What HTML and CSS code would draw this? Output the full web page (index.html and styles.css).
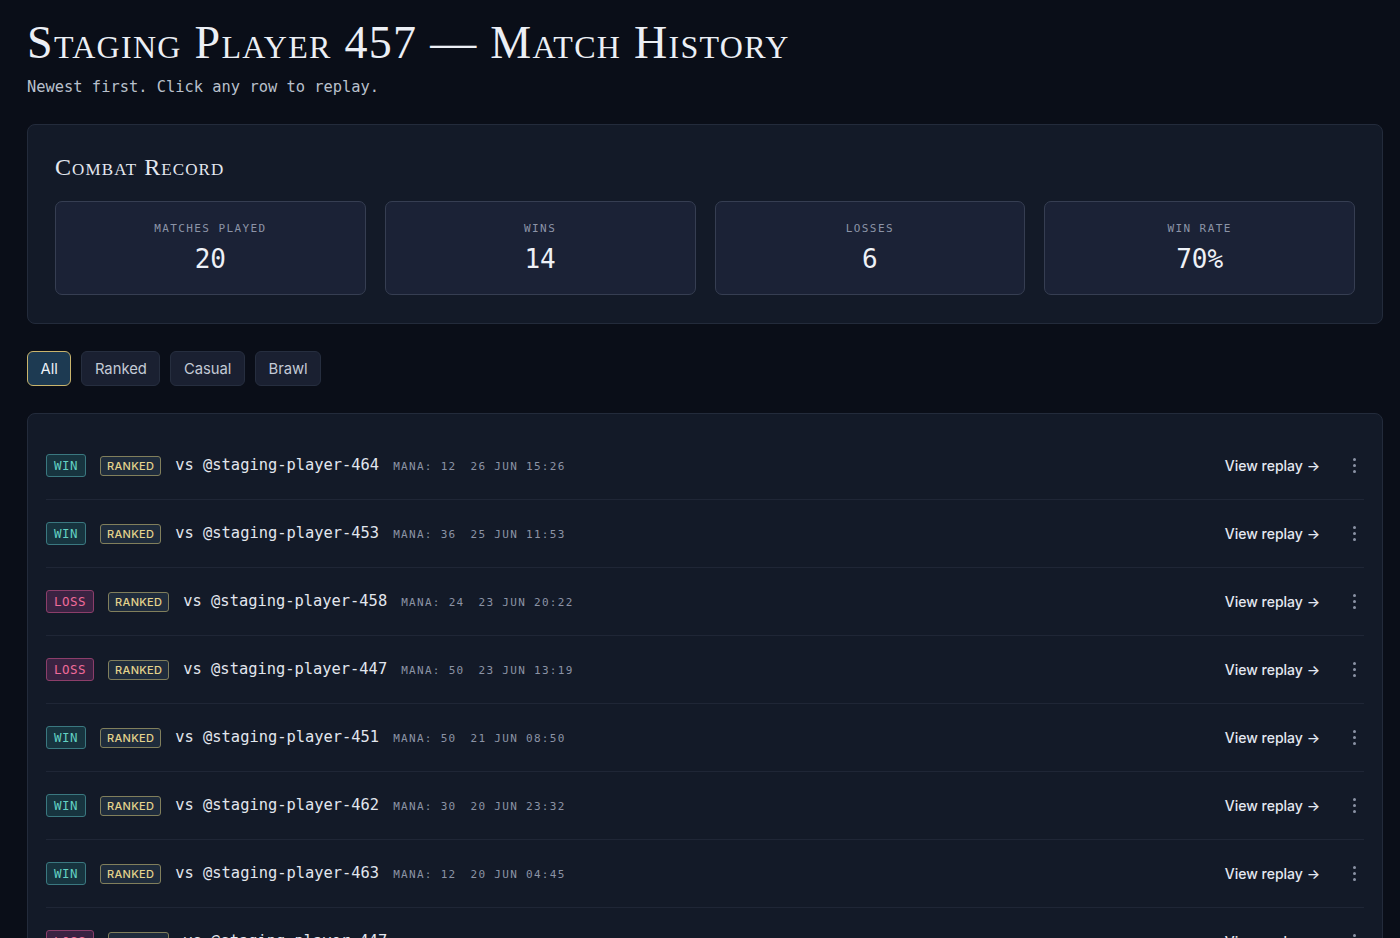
FILE: index.html
```html
<html lang="en">
<head>
    <meta charset="UTF-8">
    <meta name="viewport" content="width=device-width, initial-scale=1.0">
    <title>Match History</title>
    <link rel="stylesheet" href="styles.css">
</head>
<body>

<div class="page">
    <h1 class="title">Staging Player 457 — Match History</h1>
    <p class="subtitle">Newest first. Click any row to replay.</p>

    <section class="panel record">
        <h2 class="panel-title">Combat Record</h2>
        <div class="stats">
            <div class="stat">
                <div class="stat-label">Matches played</div>
                <div class="stat-value">20</div>
            </div>
            <div class="stat">
                <div class="stat-label">Wins</div>
                <div class="stat-value">14</div>
            </div>
            <div class="stat">
                <div class="stat-label">Losses</div>
                <div class="stat-value">6</div>
            </div>
            <div class="stat">
                <div class="stat-label">Win rate</div>
                <div class="stat-value">70%</div>
            </div>
        </div>
    </section>

    <div class="filters">
        <button class="filter active">All</button>
        <button class="filter">Ranked</button>
        <button class="filter">Casual</button>
        <button class="filter">Brawl</button>
    </div>

    <section class="panel matches" id="matches">
        <!-- rows are added by the script below -->
    </section>
</div>

<script>
    const matches = [
        { result: "win", mode: "Ranked", opponent: "464", mana: 12, date: "26 Jun 15:26" },
        { result: "win", mode: "Ranked", opponent: "453", mana: 36, date: "25 Jun 11:53" },
        { result: "loss", mode: "Ranked", opponent: "458", mana: 24, date: "23 Jun 20:22" },
        { result: "loss", mode: "Ranked", opponent: "447", mana: 50, date: "23 Jun 13:19" },
        { result: "win", mode: "Ranked", opponent: "451", mana: 50, date: "21 Jun 08:50" },
        { result: "win", mode: "Ranked", opponent: "462", mana: 30, date: "20 Jun 23:32" },
        { result: "win", mode: "Ranked", opponent: "463", mana: 12, date: "20 Jun 04:45" },
        { result: "loss", mode: "Ranked", opponent: "447", mana: 18, date: "19 Jun 17:02" },
        { result: "win", mode: "Casual", opponent: "455", mana: 42, date: "18 Jun 21:14" }
    ];

    const list = document.getElementById('matches');
    matches.forEach(m => {
        const row = document.createElement('div');
        row.className = 'match';
        row.innerHTML = `
            <div class="match-info">
                <span class="badge result ${m.result}">${m.result.toUpperCase()}</span>
                <span class="badge mode">${m.mode.toUpperCase()}</span>
                <span class="opponent">vs @staging-player-${m.opponent}</span>
                <span class="meta">Mana: ${m.mana}</span>
                <span class="meta">${m.date}</span>
            </div>
            <a class="replay" href="#">View replay →</a>
            <button class="more" aria-label="More"><i></i><i></i><i></i></button>
        `;
        list.appendChild(row);
    });
</script>

</body>
</html>
```

FILE: styles.css
```css
body, html {
    margin: 0;
    padding: 0;
    background-color: #0a0e18;
    color: #e6eaf2;
    font-family: Inter, "Noto Sans", sans-serif;
}

.page {
    padding: 18px 17px 0 27px;
}

.title {
    margin: 0;
    font-family: "Liberation Serif", serif;
    font-variant: small-caps;
    font-weight: normal;
    font-size: 46px;
    line-height: 50px;
    letter-spacing: 1.3px;
    color: #eceff5;
}

.subtitle {
    margin: 10px 0 0;
    font-family: "DejaVu Sans Mono", monospace;
    font-size: 15.4px;
    color: #b9c0cc;
}

.panel {
    background-color: #131a28;
    border: 1px solid #232b3b;
    border-radius: 8px;
}

.record {
    margin-top: 28px;
    padding: 28px 27px 28px;
}

.panel-title {
    margin: 0 0 20px;
    font-family: "Liberation Serif", serif;
    font-variant: small-caps;
    font-weight: normal;
    font-size: 24px;
    line-height: 28px;
    letter-spacing: 1.1px;
    color: #e3e7ef;
}

.stats {
    display: grid;
    grid-template-columns: repeat(4, 1fr);
    gap: 19px;
}

.stat {
    height: 92px;
    background-color: #1b2236;
    border: 1px solid #363e52;
    border-radius: 7px;
    display: flex;
    flex-direction: column;
    align-items: center;
    justify-content: center;
    gap: 9px;
}

.stat-label {
    font-family: "DejaVu Sans Mono", monospace;
    font-size: 11px;
    letter-spacing: 1.4px;
    text-transform: uppercase;
    color: #8c94a7;
}

.stat-value {
    font-family: "DejaVu Sans Mono", monospace;
    font-size: 26px;
    line-height: 30px;
    color: #eef1f7;
}

.filters {
    display: flex;
    gap: 10px;
    margin: 27px 0 27px;
}

.filter {
    height: 35px;
    padding: 0 12.5px;
    font-family: Inter, sans-serif;
    font-size: 14.8px;
    color: #c3cad6;
    background-color: #1a2031;
    border: 1px solid #262e3f;
    border-radius: 6px;
    cursor: pointer;
}

.filter.active {
    background-color: #1d3a52;
    border-color: #c9b46c;
    color: #eef2f8;
}

.matches {
    padding: 18px 0 0;
}

.match {
    box-sizing: border-box;
    display: flex;
    align-items: center;
    height: 68px;
    margin: 0 18px;
    border-bottom: 1px solid #1f2636;
}

.match-info {
    flex: 1;
    display: flex;
    align-items: baseline;
    gap: 14px;
}

.badge {
    border-radius: 3px;
    border: 1px solid;
}

.result {
    padding: 3px 7px;
    font-family: "DejaVu Sans Mono", monospace;
    font-size: 12.5px;
    line-height: 15px;
    letter-spacing: 0.5px;
}

.result.win {
    color: #62d1c2;
    background-color: #17343f;
    border-color: #3a7880;
}

.result.loss {
    color: #f06b9a;
    background-color: #3a2342;
    border-color: #8c3e6a;
}

.mode {
    padding: 2px 6px;
    font-size: 11px;
    line-height: 14px;
    font-weight: 500;
    letter-spacing: 0.3px;
    color: #e4d38c;
    background-color: #1f2c3c;
    border-color: #817f5c;
}

.opponent {
    font-family: "DejaVu Sans Mono", monospace;
    font-size: 15.4px;
    color: #e2e6ee;
}

.meta {
    font-family: "DejaVu Sans Mono", monospace;
    font-size: 11px;
    letter-spacing: 1.3px;
    text-transform: uppercase;
    color: #8b93a5;
}

.replay {
    font-size: 14px;
    font-weight: 500;
    color: #e3e8f1;
    text-decoration: none;
}

.more {
    display: flex;
    flex-direction: column;
    align-items: center;
    gap: 3px;
    width: 20px;
    margin-left: 24px;
    padding: 0;
    background: none;
    border: none;
    cursor: pointer;
}

.more i {
    width: 3px;
    height: 3px;
    border-radius: 50%;
    background-color: #8b93a5;
}
```
